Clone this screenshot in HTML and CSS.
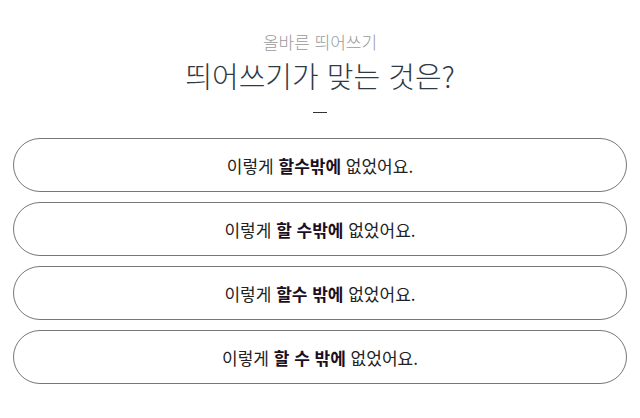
FILE: index.html
```html
<!DOCTYPE html>
<html lang="ko">
<head>
  <meta charset="UTF-8" />
  <meta name="viewport" content="width=device-width, initial-scale=1" />
  <title>올바른 띄어쓰기</title>
  <link rel="stylesheet" href="styles.css">
</head>
<body>
  <div class="quiz">
    <div class="quiz-head">
      <p class="category">올바른 띄어쓰기</p>
      <h2 class="question">띄어쓰기가 맞는 것은?</h2>
      <div class="dash"></div>
    </div>

    <div class="choices">
      <button class="choice">이렇게 <b>할수밖에</b> 없었어요.</button>
      <button class="choice">이렇게 <b>할 수밖에</b> 없었어요.</button>
      <button class="choice">이렇게 <b>할수 밖에</b> 없었어요.</button>
      <button class="choice">이렇게 <b>할 수 밖에</b> 없었어요.</button>
    </div>
  </div>
</body>
</html>
```

FILE: styles.css
```css
body {
  margin: 0;
  background: #fff;
  font-family: "Noto Sans CJK KR", "Noto Sans", sans-serif;
}
.quiz {
  padding: 30px 13px 0;
}
.quiz-head {
  text-align: center;
}
.category {
  margin: 0;
  font-size: 17px;
  font-weight: 300;
  line-height: 24px;
  color: #9a9a9a;
}
.question {
  margin: 1px 0 0;
  font-size: 29px;
  font-weight: 300;
  line-height: 40px;
  color: #2f3a45;
}
.dash {
  width: 14px;
  height: 1px;
  background: #333;
  margin: 17px auto 0;
}
.choices {
  display: flex;
  flex-direction: column;
  gap: 10px;
  margin-top: 25px;
}
.choice {
  height: 54px;
  border: 1px solid #777;
  border-radius: 27px;
  background: #fff;
  font-family: inherit;
  font-size: 17px;
  color: #222;
  cursor: pointer;
}
.choice b {
  color: #1c0f22;
}
```
